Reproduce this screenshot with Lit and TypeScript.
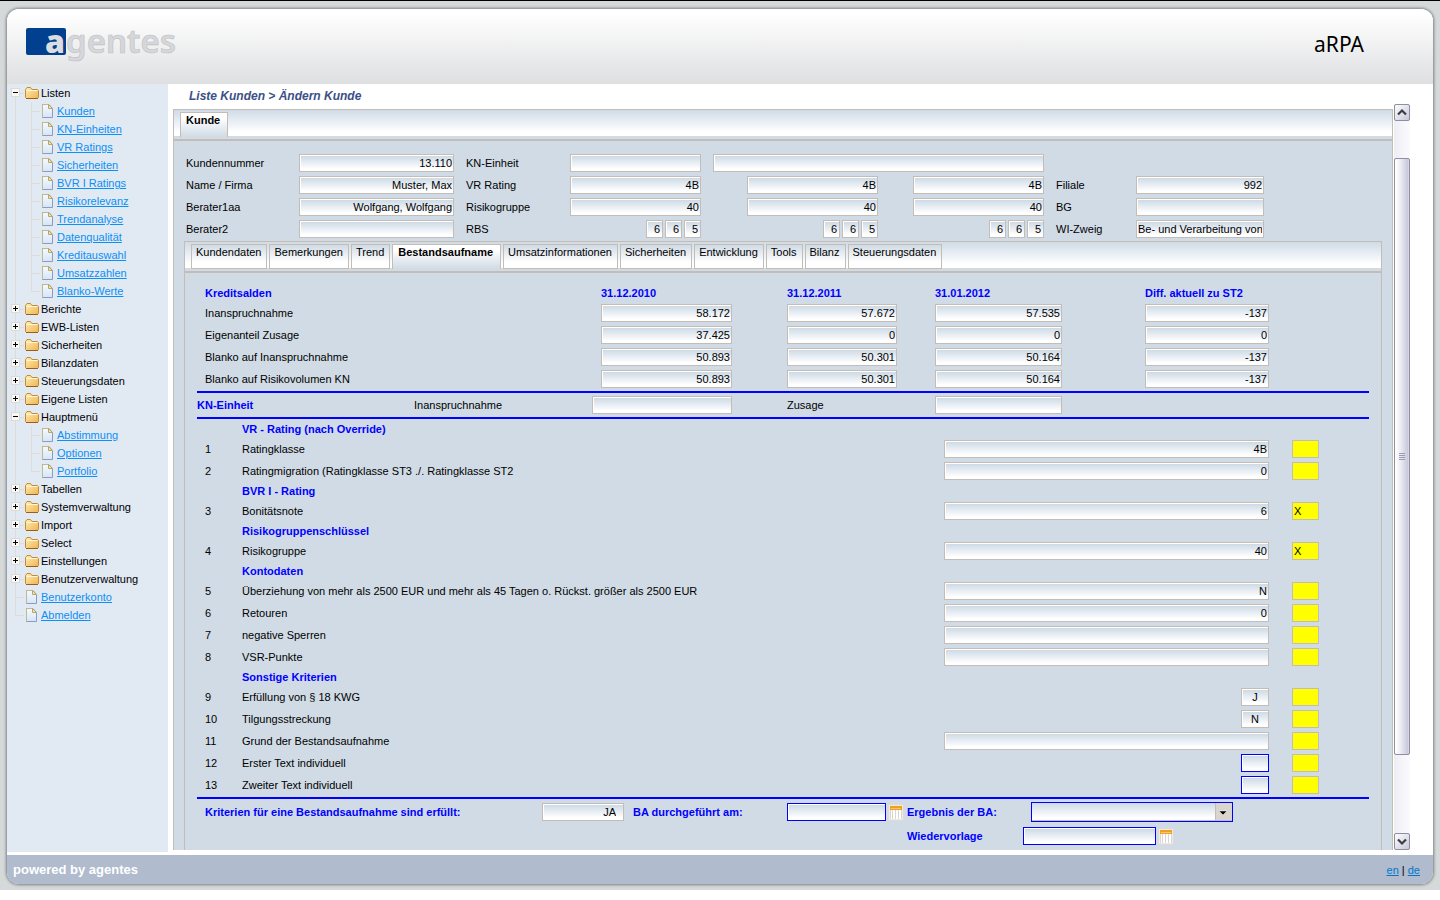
import { LitElement, html, svg, css, nothing } from "lit";
import { customElement, property, state } from "lit/decorators.js";
import { classMap } from "lit/directives/class-map.js";

type Branch = { label: string; children?: string[]; leaf?: boolean };

const TREE: Branch[] = [
  {
    label: "Listen",
    children: [
      "Kunden", "KN-Einheiten", "VR Ratings", "Sicherheiten", "BVR I Ratings", "Risikorelevanz",
      "Trendanalyse", "Datenqualität", "Kreditauswahl", "Umsatzzahlen", "Blanko-Werte",
    ],
  },
  { label: "Berichte" },
  { label: "EWB-Listen" },
  { label: "Sicherheiten" },
  { label: "Bilanzdaten" },
  { label: "Steuerungsdaten" },
  { label: "Eigene Listen" },
  { label: "Hauptmenü", children: ["Abstimmung", "Optionen", "Portfolio"] },
  { label: "Tabellen" },
  { label: "Systemverwaltung" },
  { label: "Import" },
  { label: "Select" },
  { label: "Einstellungen" },
  { label: "Benutzerverwaltung" },
  { label: "Benutzerkonto", leaf: true },
  { label: "Abmelden", leaf: true },
];

const TABS = [
  "Kundendaten", "Bemerkungen", "Trend", "Bestandsaufname", "Umsatzinformationen",
  "Sicherheiten", "Entwicklung", "Tools", "Bilanz", "Steuerungsdaten",
];

const BALANCE_DATES = ["31.12.2010", "31.12.2011", "31.01.2012", "Diff. aktuell zu ST2"];

const BALANCES: [string, string[]][] = [
  ["Inanspruchnahme", ["58.172", "57.672", "57.535", "-137"]],
  ["Eigenanteil Zusage", ["37.425", "0", "0", "0"]],
  ["Blanko auf Inanspruchnahme", ["50.893", "50.301", "50.164", "-137"]],
  ["Blanko auf Risikovolumen KN", ["50.893", "50.301", "50.164", "-137"]],
];

type Criterion = { label: string; value?: string; flag?: string; kind?: "short" | "edit" };

const CRITERIA: { title: string; items: Criterion[] }[] = [
  {
    title: "VR - Rating (nach Override)",
    items: [
      { label: "Ratingklasse", value: "4B" },
      { label: "Ratingmigration (Ratingklasse ST3 ./. Ratingklasse ST2", value: "0" },
    ],
  },
  { title: "BVR I - Rating", items: [{ label: "Bonitätsnote", value: "6", flag: "X" }] },
  { title: "Risikogruppenschlüssel", items: [{ label: "Risikogruppe", value: "40", flag: "X" }] },
  {
    title: "Kontodaten",
    items: [
      { label: "Überziehung von mehr als 2500 EUR und mehr als 45 Tagen o. Rückst. größer als 2500 EUR", value: "N" },
      { label: "Retouren", value: "0" },
      { label: "negative Sperren" },
      { label: "VSR-Punkte" },
    ],
  },
  {
    title: "Sonstige Kriterien",
    items: [
      { label: "Erfüllung von § 18 KWG", value: "J", kind: "short" },
      { label: "Tilgungsstreckung", value: "N", kind: "short" },
      { label: "Grund der Bestandsaufnahme" },
      { label: "Erster Text individuell", kind: "edit" },
      { label: "Zweiter Text individuell", kind: "edit" },
    ],
  },
];

const controls = css`
  * {
    box-sizing: border-box;
  }
  button,
  input,
  select {
    font: inherit;
    color: inherit;
    margin: 0;
    border-radius: 0;
  }
  button {
    padding: 0;
    border: 0;
    background: none;
    cursor: pointer;
  }
  svg {
    display: block;
    flex: none;
  }
`;

@customElement("nav-tree")
export class NavTree extends LitElement {
  @state() private open = new Set(["Listen", "Hauptmenü"]);

  static styles = [
    controls,
    css`
      :host {
        display: block;
      }
      .list {
        list-style: none;
        margin: 0;
        padding: 0;
      }
      .row {
        display: flex;
        align-items: center;
        height: 18px;
        white-space: nowrap;
      }
      .folder {
        display: flex;
        align-items: center;
        gap: 2px;
        padding-left: 1px;
      }
      .leaf {
        display: flex;
        align-items: center;
        gap: 4px;
        padding-left: 2px;
        color: #0a90f6;
      }
    `,
  ];

  private rail(end: boolean, branch: boolean) {
    return html`<svg width="16" height="18" viewBox="0 0 16 18" aria-hidden="true">
      <path d="M7.5 0V${end ? 9 : 18}${branch ? "M7.5 9.5H16" : ""}" stroke="#dfdcd8" fill="none" />
    </svg>`;
  }

  private toggle(item: Branch, first: boolean) {
    const expanded = this.open.has(item.label);
    return html`<button
      aria-label=${item.label + (expanded ? " schließen" : " öffnen")}
      @click=${() => this.flip(item.label)}
    >
      <svg width="16" height="18" viewBox="0 0 16 18">
        <path d="M7.5 ${first ? 9 : 0}V18M7.5 9.5H16" stroke="#dfdcd8" />
        <rect x="3.5" y="4.5" width="8" height="8" fill="#f8f8f6" stroke="#dedbd6" />
        <path d="M5 8.5H10" stroke="#000" />
        ${expanded ? nothing : svg`<path d="M7.5 6V11" stroke="#000" />`}
      </svg>
    </button>`;
  }

  private flip(label: string) {
    const next = new Set(this.open);
    if (!next.delete(label)) next.add(label);
    this.open = next;
  }

  private folder() {
    return html`<svg width="14" height="12" viewBox="0 0 14 12" aria-hidden="true">
      <defs>
        <linearGradient id="f" x1="0" y1="0" x2="1" y2="1">
          <stop offset="0" stop-color="#ffeeb8" />
          <stop offset="1" stop-color="#f0b44c" />
        </linearGradient>
      </defs>
      <path d="M.5 10.5V2.5L2 .5H5.500L7 2.500H12.500L13.500 3.500V10.500L12.500 11.500H1.500Z" fill="url(#f)" stroke="#c58a35" />
      <path d="M1.500 3.500H12.500" stroke="#fff6d4" />
      <path d="M1 11.500H13" stroke="#9c5c1c" />
    </svg>`;
  }

  private page() {
    return html`<svg width="11" height="14" viewBox="0 0 11 14" aria-hidden="true">
      <defs>
        <linearGradient id="p" x1="0" y1="0" x2="0" y2="1">
          <stop offset="0" stop-color="#f6faff" />
          <stop offset="1" stop-color="#d3e5fb" />
        </linearGradient>
      </defs>
      <path d="M.5 .5H7L10.500 4.500V13.500H.5Z" fill="url(#p)" stroke="#8f9bb8" />
      <path d="M.5 13V.5H7" fill="none" stroke="#c3b88c" />
      <path d="M6.500 .5V4.500H10.500Z" fill="#efe3ae" stroke="#b5a76e" />
    </svg>`;
  }

  private link(label: string) {
    return html`<a class="leaf" href="#">${this.page()}<span>${label}</span></a>`;
  }

  render() {
    return html`<ul class="list">
      ${TREE.map((item, i) => {
        const last = i === TREE.length - 1;
        if (item.leaf) return html`<li class="row">${this.rail(last, true)}${this.link(item.label)}</li>`;
        const children = this.open.has(item.label) ? item.children ?? [] : [];
        return html`<li>
          <div class="row">
            ${this.toggle(item, i === 0)}
            <span class="folder">${this.folder()}<span>${item.label}</span></span>
          </div>
          ${children.length
            ? html`<ul class="list">
                ${children.map(
                  (c, n) => html`<li class="row">
                    ${this.rail(false, false)}${this.rail(n === children.length - 1, true)}${this.link(c)}
                  </li>`,
                )}
              </ul>`
            : nothing}
        </li>`;
      })}
    </ul>`;
  }
}

@customElement("tab-panel")
export class TabPanel extends LitElement {
  @property({ attribute: false }) tabs: string[] = [];
  @property() active = "";

  static styles = [
    controls,
    css`
      :host {
        display: block;
        border: 1px solid #c4bdb5;
        background: #d0dbe5;
      }
      .strip {
        display: flex;
        gap: 2px;
        height: 26px;
        padding: 2px 6px 0;
        background: linear-gradient(#cfdbe6, #fff 85%);
      }
      .tab {
        height: 25px;
        padding: 0 5px 9px 4px;
        border: 1px solid #c4bdb5;
        background: linear-gradient(#d0dbe5, #fff 75%);
        white-space: nowrap;
      }
      .active {
        padding: 0 7px 10px 5px;
        border-bottom: 0;
        background: linear-gradient(#fff 20%, #d0dbe5);
        font-weight: bold;
      }
      .body {
        margin-top: 3px;
        border-top: 2px solid #c4bdb5;
      }
    `,
  ];

  render() {
    return html`
      <div class="strip" role="tablist">
        ${this.tabs.map(
          (t) => html`<button
            role="tab"
            aria-selected=${t === this.active}
            class=${classMap({ tab: true, active: t === this.active })}
          >${t}</button>`,
        )}
      </div>
      <div class="body"><slot></slot></div>
    `;
  }
}

@customElement("app-root")
export class AppRoot extends LitElement {
  static styles = [
    controls,
    css`
      :host {
        display: block;
        background: #fff;
        color: #000;
        font: 11px/14px "Liberation Sans", Arial, sans-serif;
      }
      .page {
        display: flex;
        height: calc(100vh - 10px);
        padding: 8px 7px 6px;
        border-top: 1px solid #000;
        background: #d6d9d9;
      }
      .frame {
        flex: 1;
        min-width: 0;
        display: flex;
        flex-direction: column;
        overflow: hidden;
        border-radius: 12px;
        background: #fff;
        box-shadow: 0 0 3px 1px #7d8182;
      }
      .header {
        display: flex;
        align-items: center;
        justify-content: space-between;
        height: 75px;
        padding: 0 69px 5px 19px;
        background: linear-gradient(#fff 5%, #dedfe1);
      }
      .product {
        font: 21px/24px "Noto Sans", sans-serif;
      }
      .middle {
        flex: 1;
        min-height: 0;
        display: flex;
      }
      .side {
        flex: none;
        width: 161px;
        margin-bottom: 3px;
        padding-left: 1px;
        background: #e1e9f3;
      }
      .main {
        flex: 1;
        min-width: 0;
        display: flex;
        flex-direction: column;
        padding: 0 23px 5px 5px;
      }
      .crumb {
        height: 20px;
        margin: 0;
        padding: 4px 16px 0;
        color: #3b5087;
        font-size: 12px;
        font-weight: bold;
        font-style: italic;
        line-height: 16px;
      }
      .viewport {
        flex: 1;
        min-height: 0;
        display: flex;
        gap: 1px;
      }
      .content {
        flex: 1;
        min-width: 0;
        overflow: hidden;
        padding-top: 5px;
      }
      .inner {
        margin: 1px 10px 10px;
      }
      .master {
        display: grid;
        grid-template-columns: 113px 167px 104px 143px 34px 166px 143px 80px 128px;
        grid-auto-rows: 22px;
        align-items: center;
        padding: 11px 12px 0;
      }
      .wide {
        grid-column: span 3;
      }
      .rbs {
        display: flex;
        justify-content: flex-end;
        gap: 2px;
      }
      .c1 {
        grid-column: 1;
      }
      .c6 {
        grid-column: 6;
      }
      .details {
        padding: 11px 12px 20px;
      }
      .field {
        display: block;
        height: 18px;
        padding: 0 1px;
        border: 1px solid #c4bdb5;
        background: linear-gradient(#cddae6, #fff 80%) 1px 1px / 100% 100% no-repeat #fff;
        text-align: right;
        outline: 0;
      }
      .w17 {
        width: 17px;
        padding-right: 2px;
      }
      .w28 {
        width: 28px;
      }
      .w82 {
        width: 82px;
        padding-right: 7px;
      }
      .w99 {
        width: 99px;
      }
      .w131 {
        width: 131px;
      }
      .w133 {
        width: 133px;
      }
      .w155 {
        width: 155px;
      }
      .w331 {
        width: 331px;
      }
      .fill {
        width: 100%;
      }
      .edit {
        border-color: #00f;
      }
      .center {
        text-align: center;
      }
      .end {
        margin-left: auto;
      }
      .flag {
        width: 27px;
        background: #ff0;
        text-align: left;
      }
      .rule {
        height: 2px;
        margin: 1px 0;
        border: 0;
        background: #00f;
      }
      .strong {
        color: #00f;
        font-weight: bold;
      }
      .table {
        width: 100%;
        table-layout: fixed;
        border-collapse: collapse;
      }
      .table th,
      .table td {
        padding: 0;
        height: 22px;
        text-align: left;
        font-weight: normal;
        white-space: nowrap;
      }
      .table .strong {
        height: 18px;
        font-weight: bold;
      }
      .table .lead {
        padding-left: 8px;
      }
      .gap23 {
        padding-right: 23px;
      }
      .unit {
        display: grid;
        grid-template-columns: 217px 1fr 140px 55px 148px 127px 307px;
        align-items: center;
        height: 22px;
      }
      .unit .z {
        grid-column: 5;
      }
      .result {
        display: grid;
        grid-template-columns: 1fr 91px 154px 120px 116px 346px;
        grid-auto-rows: 24px;
        align-items: center;
        padding-left: 8px;
      }
      .again {
        grid-column: 5;
      }
      .date {
        display: flex;
        align-items: center;
        gap: 2px;
      }
      .choice {
        display: grid;
        width: 202px;
        height: 20px;
        margin-left: 8px;
        align-items: center;
      }
      .select {
        grid-area: 1 / 1;
        appearance: none;
        width: 100%;
        height: 20px;
        padding: 0 20px 0 4px;
        border: 1px solid #00f;
        background: linear-gradient(#cddae6, #fff 80%);
        box-shadow: inset -1px -1px #c4bdb5;
        outline: 0;
      }
      .arrow {
        grid-area: 1 / 1;
        justify-self: end;
        margin-right: 1px;
        pointer-events: none;
      }
      .scrollbar {
        flex: none;
        display: flex;
        flex-direction: column;
        width: 16px;
        background: linear-gradient(90deg, #ededf5, #fbfbfe);
      }
      .before {
        flex: 37;
      }
      .thumb {
        flex: 597;
        display: grid;
        place-items: center;
        border: 1px solid #8d8da3;
        border-radius: 2px;
        background: linear-gradient(90deg, #fff 5%, #ececf3 40%, #c9c9dc 90%, #dcdce8);
      }
      .after {
        flex: 78;
      }
      .footer {
        display: flex;
        align-items: center;
        justify-content: space-between;
        height: 29px;
        padding: 0 13px 0 6px;
        background: #b0bbcd;
      }
      .credit {
        color: #fff;
        font-size: 13px;
        font-weight: bold;
      }
      .lang {
        color: #0077cc;
      }
    `,
  ];

  private field(label: string, value = "", size = "fill", extra = "", id = "") {
    return html`<input
      class="field ${size} ${extra}"
      id=${id || nothing}
      aria-label=${id ? nothing : label}
      .value=${value}
      ?readonly=${!extra.includes("edit")}
    />`;
  }

  private calendar(label: string) {
    return html`<button aria-label=${label}>
      <svg width="16" height="17" viewBox="0 0 16 17">
        <rect x=".5" y=".5" width="15" height="16" rx="1" fill="#ece9e6" stroke="#dcd9d6" />
        <rect x="2" y="2" width="12" height="13" fill="#fff" />
        <path d="M4.500 6V15M7.500 6V15M10.500 6V15M13.500 6V15M2.500 6V15" stroke="#d9d5d2" />
        <rect x="2" y="2" width="12" height="4" fill="#f0a020" />
        <path d="M3 4.500H13" stroke="#f9c970" />
      </svg>
    </button>`;
  }

  private arrowButton(up: boolean) {
    return html`<button aria-label=${up ? "Nach oben" : "Nach unten"}>
      <svg width="16" height="17" viewBox="0 0 16 17">
        <defs>
          <linearGradient id="b" x1="0" y1="0" x2="1" y2="1">
            <stop offset="0" stop-color="#fff" />
            <stop offset="1" stop-color="#c6c6da" />
          </linearGradient>
        </defs>
        <rect x=".5" y=".5" width="15" height="16" rx="1.500" fill="url(#b)" stroke="#8d8da3" />
        <path d=${up ? "M4 10.500L8 6.500L12 10.500" : "M4 6.500L8 10.500L12 6.500"} fill="none" stroke="#3c3c44" stroke-width="2.200" />
      </svg>
    </button>`;
  }

  private rbs(set: string) {
    return html`<div class="rbs w131">
      ${["6", "6", "5"].map((v, i) => this.field(`RBS ${set}.${i + 1}`, v, "w17"))}
    </div>`;
  }

  private master() {
    return html`<div class="master">
      <label for="kdnr">Kundennummer</label>${this.field("", "13.110", "w155", "", "kdnr")}
      <label for="kn">KN-Einheit</label>${this.field("", "", "w131", "", "kn")}
      <div class="wide">${this.field("KN-Einheit Name", "", "w331")}</div>

      <label class="c1" for="name">Name / Firma</label>${this.field("", "Muster, Max", "w155", "", "name")}
      <label for="vr">VR Rating</label>${this.field("", "4B", "w131", "", "vr")}
      ${this.field("VR Rating 2", "4B", "w131", "c6")}${this.field("VR Rating 3", "4B", "w131")}
      <label for="fil">Filiale</label>${this.field("", "992", "fill", "", "fil")}

      <label for="b1">Berater1aa</label>${this.field("", "Wolfgang, Wolfgang", "w155", "", "b1")}
      <label for="rg">Risikogruppe</label>${this.field("", "40", "w131", "", "rg")}
      ${this.field("Risikogruppe 2", "40", "w131", "c6")}${this.field("Risikogruppe 3", "40", "w131")}
      <label for="bg">BG</label>${this.field("", "", "fill", "", "bg")}

      <label for="b2">Berater2</label>${this.field("", "", "w155", "", "b2")}
      <span>RBS</span>${this.rbs("1")}
      <div class="c6">${this.rbs("2")}</div>${this.rbs("3")}
      <label for="wi">WI-Zweig</label>${this.field("", "Be- und Verarbeitung von", "fill", "", "wi")}
    </div>`;
  }

  private balances() {
    const widths = [131, 110, 127, 124];
    return html`<table class="table">
      <colgroup>
        <col />
        ${[186, 148, 210, 224].map((w) => html`<col style="width:${w}px" />`)}
      </colgroup>
      <thead>
        <tr>
          <th class="strong lead" scope="col">Kreditsalden</th>
          ${BALANCE_DATES.map((d) => html`<th class="strong" scope="col">${d}</th>`)}
        </tr>
      </thead>
      <tbody>
        ${BALANCES.map(
          ([label, values]) => html`<tr>
            <th class="lead" scope="row">${label}</th>
            ${values.map(
              (v, i) => html`<td>
                <div style="width:${widths[i]}px">${this.field(`${label} ${BALANCE_DATES[i]}`, v)}</div>
              </td>`,
            )}
          </tr>`,
        )}
      </tbody>
    </table>`;
  }

  private criteria() {
    let n = 0;
    return html`<table class="table">
      <colgroup>
        ${["45px", "auto", "348px", "77px"].map((w) => html`<col style="width:${w}" />`)}
      </colgroup>
      ${CRITERIA.map(
        (group) => html`<tbody>
          <tr>
            <td class="strong"></td>
            <th class="strong" colspan="3" scope="rowgroup">${group.title}</th>
          </tr>
          ${group.items.map((c) => {
            n += 1;
            const id = `crit${n}`;
            const size = c.kind ? "w28 end" : "fill";
            const look = c.kind === "short" ? "center" : c.kind === "edit" ? "edit" : "";
            return html`<tr>
              <td class="lead">${n}</td>
              <td><label for=${id}>${c.label}</label></td>
              <td><div class="gap23">${this.field("", c.value, size, look, id)}</div></td>
              <td>${this.field(`Kennzeichen ${n}`, c.flag, "flag")}</td>
            </tr>`;
          })}
        </tbody>`,
      )}
    </table>`;
  }

  render() {
    return html`<div class="page">
      <div class="frame">
        <header class="header">
          <svg width="160" height="56" viewBox="0 -8 160 56" role="img" aria-label="agentes">
            <rect x="0" y="4" width="40" height="27" rx="2" fill="#00408f" />
            <g font-family="Noto Sans, sans-serif" font-size="33">
              <text x="19" y="29" font-weight="900" font-size="32" fill="#dcdde0">a</text>
              <text x="40" y="29" font-weight="600" fill="#d6d7da" stroke="#c0c1c4" stroke-width=".6">gentes</text>
            </g>
          </svg>
          <span class="product">aRPA</span>
        </header>
        <div class="middle">
          <nav class="side"><nav-tree></nav-tree></nav>
          <main class="main">
            <h1 class="crumb">Liste Kunden &gt; Ändern Kunde</h1>
            <div class="viewport">
              <div class="content">
                <tab-panel .tabs=${["Kunde"]} active="Kunde">
                  ${this.master()}
                  <tab-panel class="inner" .tabs=${TABS} active="Bestandsaufname">
                    <div class="details">
                      ${this.balances()}
                      <hr class="rule" />
                      <div class="unit">
                        <span class="strong">KN-Einheit</span>
                        <label for="kin">Inanspruchnahme</label>
                        ${this.field("", "", "fill", "", "kin")}
                        <label class="z" for="kzu">Zusage</label>
                        ${this.field("", "", "fill", "", "kzu")}
                      </div>
                      <hr class="rule" />
                      ${this.criteria()}
                      <hr class="rule" />
                      <div class="result">
                        <label class="strong" for="ok">Kriterien für eine Bestandsaufnahme sind erfüllt:</label>
                        ${this.field("", "JA", "w82", "", "ok")}
                        <label class="strong" for="am">BA durchgeführt am:</label>
                        <div class="date">${this.field("", "", "w99", "edit", "am")}${this.calendar("Datum wählen")}</div>
                        <label class="strong" for="erg">Ergebnis der BA:</label>
                        <div class="choice">
                          <select class="select" id="erg"><option></option></select>
                          <svg class="arrow" width="17" height="18" viewBox="0 0 17 18" aria-hidden="true">
                            <rect width="17" height="18" fill="#d9d4ce" />
                            <path d="M.5 0V18M0 17.500H17" stroke="#c4bdb5" />
                            <path d="M4 8H12L8 12Z" fill="#000" stroke="#fff" stroke-width=".5" />
                          </svg>
                        </div>
                        <label class="strong again" for="wv">Wiedervorlage</label>
                        <div class="date">${this.field("", "", "w133", "edit", "wv")}${this.calendar("Wiedervorlage wählen")}</div>
                      </div>
                    </div>
                  </tab-panel>
                </tab-panel>
              </div>
              <div class="scrollbar">
                ${this.arrowButton(true)}
                <div class="before"></div>
                <div class="thumb">
                  <svg width="6" height="8" viewBox="0 0 6 8" aria-hidden="true">
                    <path d="M0 .5H6M0 2.500H6M0 4.500H6M0 6.500H6" stroke="#9a9ab0" />
                  </svg>
                </div>
                <div class="after"></div>
                ${this.arrowButton(false)}
              </div>
            </div>
          </main>
        </div>
        <footer class="footer">
          <span class="credit">powered by agentes</span>
          <span><a class="lang" href="#">en</a> | <a class="lang" href="#">de</a></span>
        </footer>
      </div>
    </div>`;
  }
}
